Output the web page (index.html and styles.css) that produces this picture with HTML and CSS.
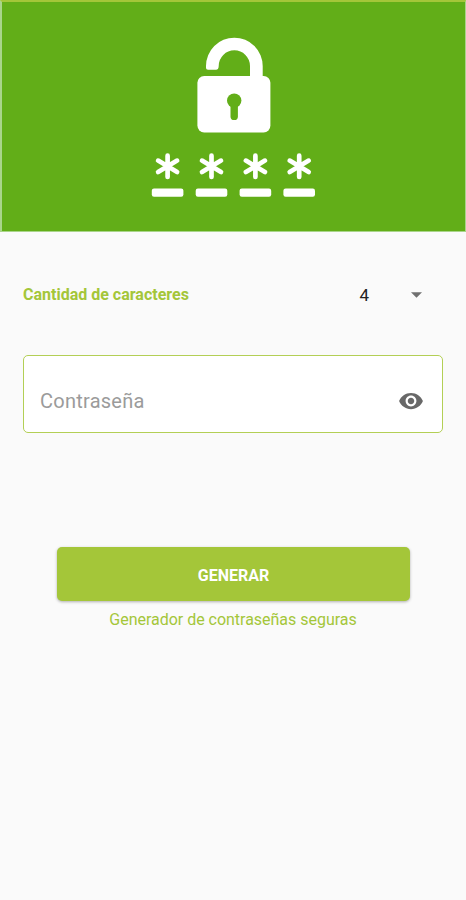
FILE: index.html
```html
<!DOCTYPE html>
<html lang="es">
<head>
<meta charset="utf-8">
<title>Generador de contraseñas</title>
<link rel="stylesheet" href="styles.css">
</head>
<body>
<header class="hero">
  <svg class="lock" width="190" height="190" viewBox="0 0 190 190" aria-hidden="true">
    <defs>
      <g id="digit">
        <path d="M0-10.6V10.6M-9.5-5.7L9.5 5.7M-9.5 5.7L9.5-5.7" fill="none" stroke="#fff" stroke-width="4.7" stroke-linecap="round"/>
        <rect x="-15.8" y="22.2" width="31.6" height="8.2" rx="2.2" fill="#fff"/>
      </g>
    </defs>
    <path d="M66 43V41A28.35 28.35 0 0 1 122.7 41V54H110V41A15.65 15.65 0 0 0 78.7 41Q78.7 44.7 76 44.7H68Q66 44.7 66 43Z" fill="#fff"/>
    <rect x="57.4" y="51" width="73" height="56.4" rx="6.8" fill="#fff"/>
    <circle cx="94.2" cy="75.6" r="7.2" fill="#62ae18"/>
    <path d="M94.2 76V91.4" stroke="#62ae18" stroke-width="7.4" stroke-linecap="round"/>
    <use href="#digit" x="27.6" y="141.3"/>
    <use href="#digit" x="71.5" y="141.3"/>
    <use href="#digit" x="115.4" y="141.3"/>
    <use href="#digit" x="159.2" y="141.3"/>
  </svg>
</header>
<main class="content">
  <div class="row">
    <span class="label">Cantidad de caracteres</span>
    <span class="select">
      <span class="value">4</span>
      <svg class="caret" width="11" height="6" viewBox="0 0 12 6" aria-hidden="true"><path d="M0 0H12L6 6Z" fill="#707070"/></svg>
    </span>
  </div>
  <div class="field">
    <span class="placeholder">Contraseña</span>
    <svg class="eye" width="26" height="26" viewBox="0 0 24 24" aria-hidden="true"><path fill="#686868" d="M12 4.500C7 4.500 2.730 7.610 1 12c1.730 4.390 6 7.500 11 7.500s9.270-3.110 11-7.500c-1.730-4.390-6-7.500-11-7.500zM12 17c-2.760 0-5-2.240-5-5s2.240-5 5-5 5 2.240 5 5-2.240 5-5 5zm0-8c-1.660 0-3 1.340-3 3s1.340 3 3 3 3-1.340 3-3-1.340-3-3-3z"/></svg>
  </div>
  <button class="generate" type="button">GENERAR</button>
  <p class="caption">Generador de contraseñas seguras</p>
</main>
</body>
</html>
```
FILE: styles.css
```css
* { box-sizing: border-box; }

body {
  margin: 0;
  min-height: 900px;
  background: #fafafa;
  font-family: Roboto, "Liberation Sans", sans-serif;
}

.hero {
  height: 232px;
  padding-top: 23px;
  display: flex;
  justify-content: center;
  background: #62ae18;
  border: 1px solid #a9d58a;
  border-top: 2px solid #a4c639;
  border-left-width: 2px;
}

.lock { display: block; margin-left: 3px; }

.content {
  display: flex;
  flex-direction: column;
  padding: 0 23px;
}

.row {
  display: flex;
  justify-content: space-between;
  align-items: center;
  height: 40px;
  margin-top: 43px;
}

.label {
  color: #a4c639;
  font-size: 16px;
  font-weight: 700;
  line-height: 20px;
}

.select {
  display: flex;
  align-items: center;
  gap: 42px;
  margin-right: 21px;
}

.value {
  color: #222;
  font-size: 17px;
  line-height: 20px;
}

.caret { display: block; }

.field {
  display: flex;
  justify-content: space-between;
  align-items: center;
  height: 78px;
  margin-top: 40px;
  padding: 13px 18px 0 16px;
  background: #fff;
  border: 1px solid #b3cf55;
  border-radius: 5px;
}

.placeholder {
  color: #9b9b9b;
  font-size: 20px;
  letter-spacing: 0.250px;
}

.generate {
  height: 54px;
  margin: 114px 33px 0 34px;
  padding: 2px 0 0;
  border: 0;
  border-radius: 5px;
  background: #a4c639;
  box-shadow: 0 1px 3px rgba(0, 0, 0, 0.3);
  color: #fff;
  font: 700 16px/54px Roboto, "Liberation Sans", sans-serif;
}

.caption {
  margin: 8px 0 0;
  text-align: center;
  color: #a4c639;
  font-size: 16px;
  line-height: 21px;
  letter-spacing: -0.020px;
}
```
